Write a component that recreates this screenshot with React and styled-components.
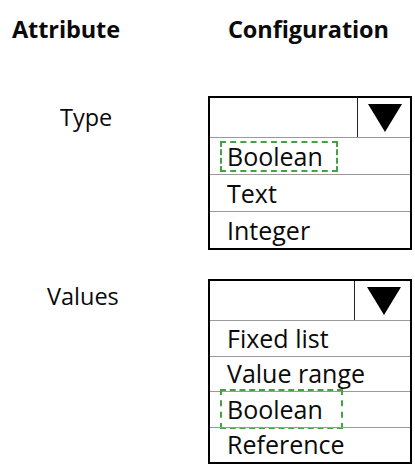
import React from "react";
import styled, { createGlobalStyle } from "styled-components";

const GlobalStyle = createGlobalStyle`
	html, body {
		margin: 0;
		padding: 0;
		background: #ffffff;
	}

	body {
		font-family: "Open Sans", "Liberation Sans", sans-serif;
		color: #0a0a0a;
	}
`;

const Page = styled.div`
	width: 415px;
	height: 466px;
	padding-top: 13px;
	box-sizing: border-box;
	overflow: hidden;
`;

const Row = styled.div`
	display: grid;
	grid-template-columns: 208px 204px;
	margin-top: ${p => p.gap || 0}px;
`;

const Heading = styled.h2`
	margin: 0;
	padding-left: ${p => p.indent}px;
	font-size: 23.5px;
	font-weight: 700;
	line-height: 32px;
	letter-spacing: -0.1px;
`;

const Label = styled.div`
	padding-left: ${p => p.indent}px;
	padding-top: ${p => p.top}px;
	font-size: 23.5px;
	line-height: 30px;
`;

const Dropdown = styled.div`
	border: 2px solid #000;
	display: flex;
	flex-direction: column;
`;

const Header = styled.div`
	display: flex;
	height: 39px;
`;

const Blank = styled.div`
	flex: 1;
`;

const ArrowCell = styled.div`
	width: ${p => p.width}px;
	border-left: 1.5px solid #222;
	display: flex;
	align-items: center;
	justify-content: center;
	padding-left: 2px;
`;

const Option = styled.div`
	height: ${p => p.height}px;
	border-top: 1px solid #9a9a9a;
	padding-left: 17px;
	display: flex;
	align-items: center;
	font-size: 25px;
	line-height: 1;
`;

const Marked = styled.span`
	display: inline-flex;
	align-items: center;
	margin-left: -7px;
	padding: 0 ${p => p.right}px 0 5px;
	height: ${p => p.height}px;
	border: 2px dashed #44a244;
`;

const Arrow = () => (
	<svg width="34" height="28" viewBox="0 0 34 28">
		<polygon points="0,0 34,0 17,28" fill="#000" />
	</svg>
);

const Select = ({ options, marked, arrowWidth, rowHeight, markHeight, markRight }) => (
	<Dropdown>
		<Header>
			<Blank />
			<ArrowCell width={arrowWidth}>
				<Arrow />
			</ArrowCell>
		</Header>
		{options.map(option => (
			<Option key={option} height={rowHeight}>
				{option === marked ? (
					<Marked height={markHeight} right={markRight}>
						{option}
					</Marked>
				) : (
					option
				)}
			</Option>
		))}
	</Dropdown>
);

const App = () => (
	<Page>
		<GlobalStyle />
		<Row>
			<Heading indent={12}>Attribute</Heading>
			<Heading indent={20}>Configuration</Heading>
		</Row>

		<Row gap={51}>
			<Label indent={60} top={6}>
				Type
			</Label>
			<Select
				options={["Boolean", "Text", "Integer"]}
				marked="Boolean"
				arrowWidth={50}
				rowHeight={36}
				markHeight={27}
				markRight={13}
			/>
		</Row>

		<Row gap={29}>
			<Label indent={47} top={2}>
				Values
			</Label>
			<Select
				options={["Fixed list", "Value range", "Boolean", "Reference"]}
				marked="Boolean"
				arrowWidth={53}
				rowHeight={34.5}
				markHeight={36}
				markRight={18}
			/>
		</Row>
	</Page>
);

export default App;
